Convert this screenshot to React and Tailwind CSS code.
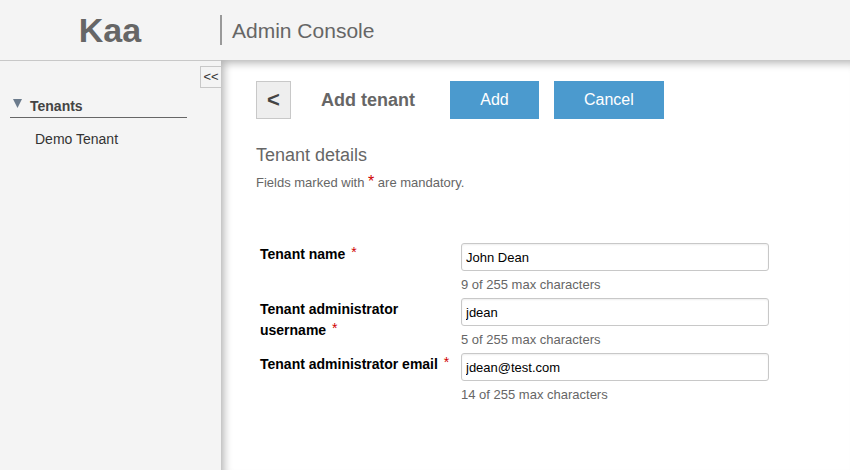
import { useState } from "react";

const FIELDS = [
  { id: "tenant-name", label: "Tenant name", value: "John Dean" },
  { id: "tenant-username", label: "Tenant administrator username", value: "jdean" },
  { id: "tenant-email", label: "Tenant administrator email", value: "jdean@test.com" },
];

function Field({ id, label, value: initial }) {
  const [value, setValue] = useState(initial);
  return (
    <div className="flex h-[55px] items-start">
      <label htmlFor={id} className="w-[201px] shrink-0 pt-px text-sm leading-[21px] font-bold text-black">
        {label} <span className="ml-0.5 align-[2px] leading-none font-normal text-[#d00000]">*</span>
      </label>
      <div className="min-w-0 max-w-[308px] flex-1">
        <input
          id={id}
          type="text"
          maxLength={255}
          required
          value={value}
          onChange={(e) => setValue(e.target.value)}
          className="block h-7 w-full rounded-[3px] border border-[#c8c8c8] bg-white px-1 pt-px text-[13px] text-black shadow-[inset_0_1px_2px_#eeeeee]"
        />
        <p className="pt-1 text-[13px] leading-5 text-[#666]">{value.length} of 255 max characters</p>
      </div>
    </div>
  );
}

export default function App() {
  return (
    <div className="flex min-h-screen flex-col bg-[#f4f4f4] font-['Liberation_Sans',Arial,sans-serif] text-[#666]">
      <header className="flex h-[60px] shrink-0 items-center">
        <div className="w-[220px] shrink-0 text-center text-[34px] leading-10 font-bold">Kaa</div>
        <div className="flex h-[30px] items-center border-l-2 border-[#999] pt-px pl-[10px] text-[21px]">Admin Console</div>
      </header>
      <div className="flex flex-1">
        <aside className="w-[221px] shrink-0 border-t border-[#c8c8c8] pt-[5px]">
          <div className="flex justify-end">
            <button type="button" aria-label="Collapse navigation" className="h-[22px] w-[21px] border border-r-0 border-[#c8c8c8] text-[13px] leading-5 text-[#333]">
              &lt;&lt;
            </button>
          </div>
          <nav className="pt-[7px] pr-[34px] pl-[10px] text-sm text-[#333]">
            <a href="#tenants" className="flex h-[23px] border-b border-[#666] pl-[3px] leading-[23px] font-bold text-[#444]">
              <svg viewBox="0 0 9 9" className="mt-1 mr-2 h-[9px] w-[9px]" aria-hidden="true">
                <path d="M0 0h9L4.500 9z" fill="#6b7b8c" />
              </svg>
              Tenants
            </a>
            <a href="#demo" className="block pt-[11px] pl-[25px] leading-5">Demo Tenant</a>
          </nav>
        </aside>
        <main className="min-w-0 flex-1 bg-white pt-[21px] pr-5 pl-[35px] shadow-[inset_0_11px_8px_-8px_#b4b4b4,inset_11px_0_8px_-8px_#b4b4b4]">
          <div className="flex h-[38px] items-stretch">
            <button type="button" aria-label="Back" className="w-[35px] border border-[#c8c8c8] bg-[#eee] text-[22px] leading-8 font-bold text-[#444]">&lt;</button>
            <h1 className="w-[159px] pl-[30px] text-lg leading-[38px] font-bold">Add tenant</h1>
            <button type="submit" form="tenant-form" className="mr-[15px] min-w-[89px] bg-[#4b9ace] px-[30px] text-base text-white">Add</button>
            <button type="button" className="bg-[#4b9ace] px-[30px] text-base text-white">Cancel</button>
          </div>
          <h2 className="pt-6 text-lg leading-6">Tenant details</h2>
          <p className="pt-[6px] text-[13px] leading-5">
            Fields marked with <span className="text-base leading-none text-[#d00000]">*</span> are mandatory.
          </p>
          <form id="tenant-form" className="pt-[50px] pl-1" onSubmit={(e) => e.preventDefault()}>
            {FIELDS.map((field) => (
              <Field key={field.id} {...field} />
            ))}
          </form>
        </main>
      </div>
    </div>
  );
}
